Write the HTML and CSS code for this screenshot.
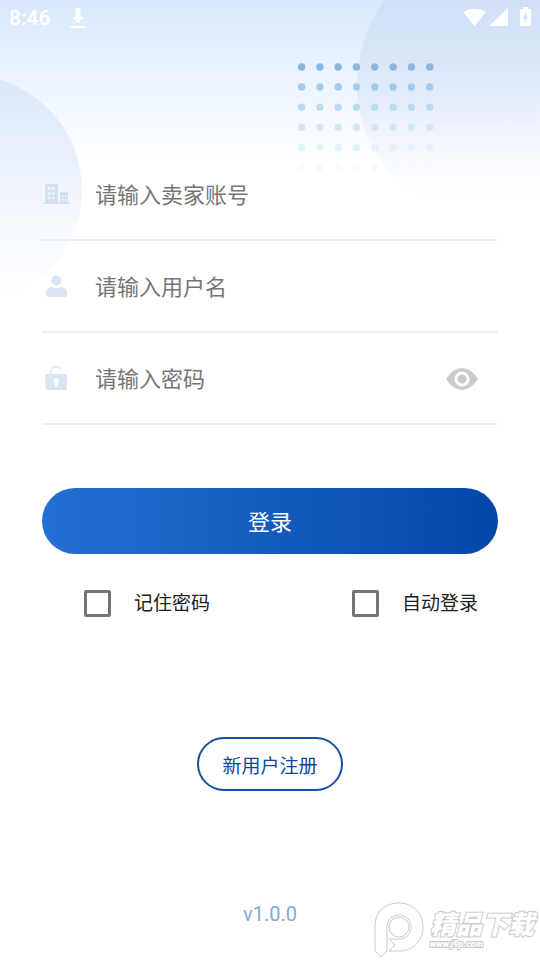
FILE: index.html
```html
<!DOCTYPE html>
<html lang="zh-CN">
<head>
<meta charset="utf-8">
<meta name="viewport" content="width=device-width, initial-scale=1">
<title>登录</title>
<link rel="stylesheet" href="styles.css">
</head>
<body>
<svg class="backdrop" width="540" height="320" viewBox="0 0 540 320" aria-hidden="true">
  <defs>
    <linearGradient id="right-fade" x1="0" y1="0" x2="0" y2="225" gradientUnits="userSpaceOnUse">
      <stop offset="0" stop-color="#cfe0f6"/>
      <stop offset=".4" stop-color="#e0eafa"/>
      <stop offset=".62" stop-color="#f3f6fd"/>
      <stop offset=".8" stop-color="#fcfdff"/>
      <stop offset="1" stop-color="#fff" stop-opacity="0"/>
    </linearGradient>
    <linearGradient id="left-fade" x1="0" y1="74" x2="0" y2="303" gradientUnits="userSpaceOnUse">
      <stop offset="0" stop-color="#d9e7f9"/>
      <stop offset=".35" stop-color="#e9f0fb"/>
      <stop offset=".65" stop-color="#f6f9fe"/>
      <stop offset="1" stop-color="#fdfeff"/>
    </linearGradient>
  </defs>
  <circle cx="498" cy="84" r="141" fill="url(#right-fade)"/>
  <circle cx="-33" cy="190" r="115" fill="url(#left-fade)"/>
  <g fill="none" stroke-width="7.4" stroke-linecap="round" stroke-dasharray="0 18.3">
    <path d="M301.6 67H430" stroke="#8bb7df"/>
    <path d="M301.6 87H430" stroke="#a5caea"/>
    <path d="M301.6 107.200H430" stroke="#b9dcf0"/>
    <path d="M301.6 127.300H430" stroke="#d0eaf5"/>
    <path d="M301.6 147.400H430" stroke="#e3f3fb"/>
    <path d="M301.6 167.500H430" stroke="#f7fbfd"/>
  </g>
</svg>

<header class="status">
  <span class="time">8:46</span>
  <svg class="download" width="16" height="22" viewBox="0 0 16 22" aria-hidden="true"><path d="M5.500 1h5v9h3.500L8 16 2 10h3.500zM.5 19h15v2H.5z"/></svg>
  <svg class="signals" width="68" height="22" viewBox="0 0 68 22" aria-hidden="true">
    <path d="M0 5Q11-1.500 23 5L11.500 19zM26 19L45 1v18z"/>
    <path fill-rule="evenodd" d="M58 2h2V0h5v2h2q1 0 1 1v15q0 1-1 1h-9q-1 0-1-1V3q0-1 1-1zM63.500 4.500l-4 7h2.500l-1 5 4.500-7h-2.500z"/>
  </svg>
</header>

<main class="login">
  <form class="form">
    <div class="field">
      <label for="seller"><svg width="28" height="28" viewBox="0 0 28 28" role="img" aria-label="卖家账号"><path fill="#d3e0f1" fill-rule="evenodd" d="M3 3h13v19h2V11h8v11h2v1H1v-1h2zM6 6v3h2.500V6zm4 0v3h2.500V6zm-4 5v3h2.500v-3zm4 0v3h2.500v-3zm-4 5v2h2.500v-2zm4 0v2h2.500v-2zm10-2v2h1.500v-2zm3 0v2h1.500v-2zm-3 4v2h1.500v-2zm3 0v2h1.500v-2z"/></svg></label>
      <input id="seller" type="text" placeholder="请输入卖家账号">
    </div>
    <div class="field">
      <label for="user"><svg width="28" height="28" viewBox="0 0 28 28" role="img" aria-label="用户名"><g fill="#dae4f5"><circle cx="14.300" cy="7.500" r="5"/><path d="M4 22v-2q0-6 6-6 4.300 3 8.600 0 6.400 0 6.400 6v2q0 2-2 2H6q-2 0-2-2z"/></g></svg></label>
      <input id="user" type="text" placeholder="请输入用户名">
    </div>
    <div class="field">
      <label for="password"><svg width="28" height="28" viewBox="0 0 28 28" role="img" aria-label="密码"><path d="M9 9V6q0-4.500 5-4.500 4 0 5 3.500" fill="none" stroke="#dce6f4" stroke-width="1.500"/><path fill="#d8e4f4" fill-rule="evenodd" d="M5 9h18.500q1.500 0 1.500 1.500v13q0 1.500-1.500 1.500H5q-1.500 0-1.500-1.500v-13Q3.500 9 5 9zm9.300 4a3 3 0 0 0-1.500 5.500V21.500h3v-3A3 3 0 0 0 14.300 13z"/></svg></label>
      <input id="password" type="password" placeholder="请输入密码">
      <button class="reveal" type="button" aria-label="显示密码"><svg width="34" height="24" viewBox="0 0 34 24"><path fill="#cbcbcb" d="M1 12Q8 1 17 1t16 11Q26 23 17 23T1 12z"/><circle cx="17" cy="12" r="6" fill="#cbcbcb" stroke="#fff" stroke-width="3"/></svg></button>
    </div>
    <button class="submit" type="submit">登录</button>
    <div class="options">
      <label><input type="checkbox"><span>记住密码</span></label>
      <label><input type="checkbox"><span>自动登录</span></label>
    </div>
  </form>
  <a class="register" href="#register">新用户注册</a>
</main>

<footer class="version">v1.0.0</footer>

<aside class="watermark">
  <svg width="50" height="56" viewBox="0 0 50 56" aria-hidden="true"><g fill="#fff" stroke="#c9c9c9"><path d="M1 49V24C1 10 11 1 25 1s24 10 24 24-10 24-24 24H15l6-6-6-6H25c7 0 12-5 12-12s-5-12-12-12-12 5-12 12V49l-6 6z"/><circle cx="25" cy="25" r="10"/></g></svg>
  <div class="mark">
    <span class="mark-name">精品下载</span>
    <span class="mark-url">www.j9p.com</span>
  </div>
</aside>
</body>
</html>
```

FILE: styles.css
```css
* {
  box-sizing: border-box;
}

body {
  position: relative;
  display: flex;
  flex-direction: column;
  min-height: 100vh;
  margin: 0;
  overflow-x: hidden;
  background: #fff linear-gradient(#d9e8fc 0, #e4efff 50px, #f2f8ff 105px, #fff 165px) no-repeat;
  color: #212121;
  font-family: Roboto, "Noto Sans CJK SC", sans-serif;
}

.backdrop {
  position: absolute;
  top: 0;
  right: 0;
  width: 100%;
  z-index: -1;
}

.status {
  display: flex;
  align-items: center;
  height: 36px;
  padding: 0 9px;
  color: #fff;
  fill: #fff;
  font-size: 21px;
  font-weight: 500;
}

.download {
  margin-left: 20px;
}

.signals {
  margin-left: auto;
}

.login {
  display: flex;
  flex-direction: column;
  align-items: center;
  padding: 113px 42px 0;
}

.form {
  width: 100%;
}

.field {
  display: flex;
  align-items: center;
  height: 92px;
  padding: 2px 19px 0 0;
  border-bottom: 2px solid #ededed;
}

.field label {
  display: flex;
  width: 53px;
}

.field input {
  flex: 1;
  min-width: 0;
  padding: 0;
  border: 0;
  outline: 0;
  background: none;
  color: #212121;
  font: inherit;
  font-size: 22px;
}

.field input::placeholder {
  color: #757575;
  opacity: 1;
}

.reveal {
  display: flex;
  padding: 0;
  border: 0;
  background: none;
}

.submit {
  width: 100%;
  height: 66px;
  margin-top: 63px;
  padding: 0 0 2px;
  border: 0;
  border-radius: 33px;
  background: linear-gradient(90deg, #2471d3, #0247a8);
  color: #fff;
  font: inherit;
  font-size: 22px;
}

.options {
  display: flex;
  justify-content: space-between;
  padding: 32px 20px 0 42px;
}

.options label {
  display: flex;
  align-items: center;
  gap: 23px;
  font-size: 19px;
  line-height: 32px;
}

.options span {
  padding-top: 2px;
}

.options input {
  width: 27px;
  height: 27px;
  margin: 0;
  border: 3px solid #757575;
  border-radius: 2px;
  appearance: none;
}

.options input:checked {
  background: #0247a8;
}

.register {
  height: 54px;
  margin-top: 117px;
  padding: 2px 23px 0;
  border: 2px solid #1a4fa0;
  border-radius: 27px;
  color: #0d469b;
  font-size: 19px;
  line-height: 52px;
  text-decoration: none;
}

.version {
  margin-top: auto;
  padding-bottom: 34px;
  color: #8aa6d0;
  font-size: 20px;
  line-height: 24px;
  text-align: center;
}

.watermark {
  position: absolute;
  right: 6px;
  bottom: 2px;
  display: flex;
  align-items: center;
  gap: 6px;
}

.mark {
  display: flex;
  flex-direction: column;
  color: #fff;
  font-style: italic;
  font-weight: 900;
  -webkit-text-stroke: 2px #c9c9c9;
  paint-order: stroke fill;
}

.mark-name {
  font-size: 26px;
  line-height: 28px;
}

.mark-url {
  font-size: 9px;
  line-height: 10px;
}
```
